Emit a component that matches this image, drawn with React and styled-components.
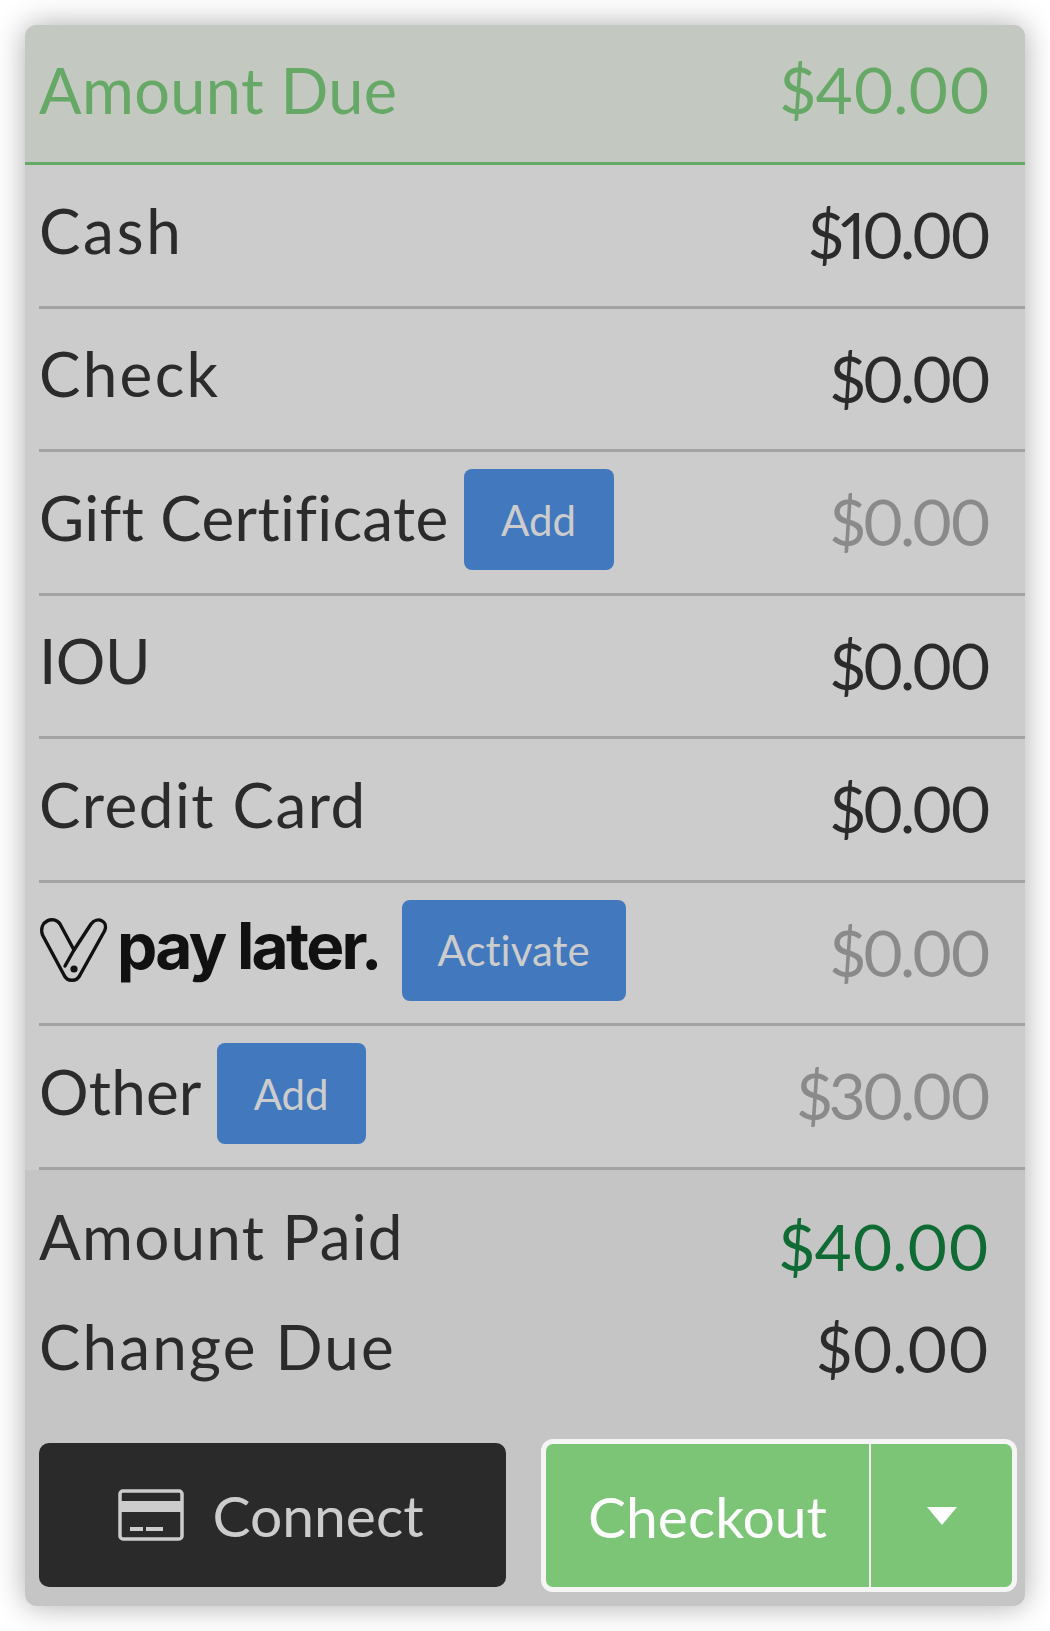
import React from "react";
import styled, { createGlobalStyle } from "styled-components";

const Global = createGlobalStyle`
  html, body { margin: 0; padding: 0; background: #fff; }
  body { font-family: "Lato", "Liberation Sans", sans-serif; font-variant-ligatures: none; }
`;

const Page = styled.div`
  padding: 25px;
  width: 1050px;
  height: 1631px;
  box-sizing: border-box;
`;

const Card = styled.div`
  width: 1000px;
  height: 1581px;
  border-radius: 12px;
  overflow: hidden;
  background: #c5c5c5;
  box-shadow: 0 0 30px rgba(0, 0, 0, 0.33);
  display: flex;
  flex-direction: column;
`;

const Due = styled.div`
  height: 140px;
  box-sizing: border-box;
  flex: none;
  background: #c3c8c1;
  border-bottom: 3px solid #66a866;
  color: #66a866;
  display: flex;
  align-items: center;
  justify-content: space-between;
  padding: 0 35px 8px 14px;
`;

const List = styled.div`
  background: #ccc;
  padding-left: 14px;
  flex: none;
`;

const Row = styled.div`
  height: 143.5px;
  box-sizing: border-box;
  border-bottom: 3px solid #a3a3a3;
  display: flex;
  align-items: center;
  justify-content: space-between;
  padding-right: 37px;
`;

const Left = styled.div`
  display: flex;
  align-items: center;
  gap: ${(p) => p.$gap || 15}px;
  margin-bottom: 5px;
`;

const Label = styled.span`
  font-size: 62px;
  line-height: 1;
  color: #2b2b2b;
  letter-spacing: ${(p) => p.$track ?? 0}px;
  position: relative;
  top: -3px;
`;

const DueLabel = styled(Label)`
  color: #66a866;
  font-size: 63px;
  top: 0;
`;

const Value = styled.span`
  font-size: 64px;
  line-height: 1;
  letter-spacing: ${(p) => (p.$open ? "-0.7px" : "-3.6px")};
  color: ${(p) => p.$color || "#2b2b2b"};
  position: relative;
  top: ${(p) => p.$drop || 0}px;
  font-variant-numeric: proportional-nums;
`;

const SmallButton = styled.button`
  border: none;
  background: #4278be;
  color: #ccc;
  font: inherit;
  font-size: 42px;
  font-variant-ligatures: none;
  height: 101px;
  width: ${(p) => p.$w}px;
  border-radius: 8px;
  padding: 0;
`;

const Logo = styled.div`
  display: flex;
  align-items: center;
  gap: 8px;
`;

const LogoText = styled.span`
  font-family: "Inter", sans-serif;
  font-weight: 700;
  font-size: 64px;
  letter-spacing: -2.7px;
  color: #111;
  line-height: 1;
  position: relative;
  top: -4px;
`;

const Summary = styled.div`
  padding: 14px 36px 0 14px;
  display: flex;
  flex-direction: column;
`;

const SummaryRow = styled.div`
  height: 110px;
  display: flex;
  align-items: center;
  justify-content: space-between;
`;

const Actions = styled.div`
  margin-top: auto;
  padding: 0 8px 14px 14px;
  display: flex;
  align-items: flex-end;
  justify-content: space-between;
`;

const Connect = styled.button`
  width: 467px;
  height: 144px;
  margin-bottom: 5px;
  border: none;
  border-radius: 10px;
  background: #2a2a2a;
  color: #ccc;
  font: inherit;
  font-size: 57px;
  display: flex;
  align-items: center;
  justify-content: center;
  gap: 28px;
  padding: 0 3px 0 0;
`;

const CheckoutGroup = styled.div`
  width: 476px;
  height: 153px;
  box-sizing: border-box;
  border: 5px solid #f5f5f5;
  border-radius: 12px;
  background: #7cc576;
  display: flex;
  overflow: hidden;
`;

const CheckoutMain = styled.button`
  width: 325px;
  flex: none;
  border: none;
  border-right: 2px solid #f5f5f5;
  background: transparent;
  color: #fff;
  font: inherit;
  font-size: 57px;
  padding: 0;
`;

const CheckoutCaret = styled.button`
  flex: 1;
  border: none;
  background: transparent;
  display: flex;
  align-items: center;
  justify-content: center;
  padding: 0;
`;

const CardIcon = () => (
  <svg width="66" height="52" viewBox="0 0 66 52" fill="none">
    <rect x="2" y="2" width="62" height="48" rx="3" stroke="#ccc" strokeWidth="3.5" />
    <rect x="2" y="12" width="62" height="11" fill="#ccc" />
    <rect x="12" y="38" width="13" height="4" fill="#ccc" />
    <rect x="28" y="38" width="17" height="4" fill="#ccc" />
  </svg>
);

const VMark = () => (
  <svg width="70" height="66" viewBox="0 0 70 66" fill="none">
    <path
      d="M3.5 18 L25 58 C28 65 38 65 41 58 L65.5 14 C70 4 58 -1 52 7 L35 33 L21 7 C15 -2 -1 4 3.5 18 Z"
      stroke="#111"
      strokeWidth="3.4"
      strokeLinejoin="round"
    />
    <path d="M35 33 L26 49" stroke="#111" strokeWidth="3.4" strokeLinecap="round" />
    <circle cx="35" cy="52" r="3.6" fill="#111" />
  </svg>
);

const rows = [
  { label: "Cash", track: 2.7, value: "$10.00" },
  { label: "Check", track: 2.3, value: "$0.00" },
  { label: "Gift Certificate", track: 0.32, value: "$0.00", muted: true, button: "Add", w: 150 },
  { label: "IOU", track: -0.5, value: "$0.00" },
  { label: "Credit Card", track: 1.5, value: "$0.00" },
  { logo: true, value: "$0.00", muted: true, button: "Activate", w: 224 },
  { label: "Other", track: 0.2, value: "$30.00", muted: true, button: "Add", w: 149 },
];

export default function App() {
  return (
    <Page>
      <Global />
      <Card>
        <Due>
          <DueLabel $track={0.4}>Amount Due</DueLabel>
          <Value $open $color="#66a866">$40.00</Value>
        </Due>
        <List>
          {rows.map((r) => (
            <Row key={r.value + (r.label || "logo")}>
              <Left $gap={r.logo ? 22 : 15}>
                {r.logo ? (
                  <Logo>
                    <VMark />
                    <LogoText>pay later.</LogoText>
                  </Logo>
                ) : (
                  <Label $track={r.track}>{r.label}</Label>
                )}
                {r.button && <SmallButton $w={r.w}>{r.button}</SmallButton>}
              </Left>
              <Value $color={r.muted ? "#8a8a8a" : undefined}>{r.value}</Value>
            </Row>
          ))}
        </List>
        <Summary>
          <SummaryRow>
            <Label $track={1.2}>Amount Paid</Label>
            <Value $open $drop={8} $color="#0f6b33">$40.00</Value>
          </SummaryRow>
          <SummaryRow>
            <Label $track={2.1}>Change Due</Label>
            <Value $open>$0.00</Value>
          </SummaryRow>
        </Summary>
        <Actions>
          <Connect>
            <CardIcon />
            Connect
          </Connect>
          <CheckoutGroup>
            <CheckoutMain>Checkout</CheckoutMain>
            <CheckoutCaret>
              <svg width="32" height="20" viewBox="0 0 32 20">
                <path d="M1 1 H31 L16 19 Z" fill="#fff" />
              </svg>
            </CheckoutCaret>
          </CheckoutGroup>
        </Actions>
      </Card>
    </Page>
  );
}
